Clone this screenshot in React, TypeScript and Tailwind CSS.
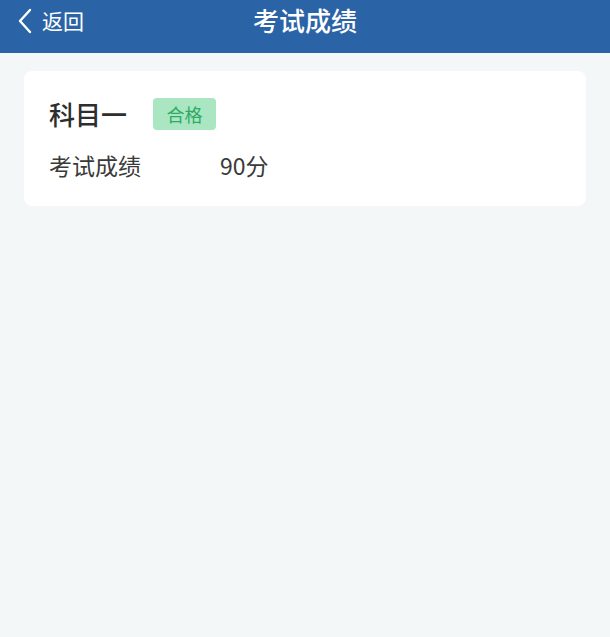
import React from "react";

export default function App() {
  return (
    <div
      className="w-[610px] h-[637px] bg-[#f3f7f8] flex flex-col"
      style={{ fontFamily: '"Noto Sans CJK SC", "Noto Sans", sans-serif' }}
    >
      <header className="relative h-[53px] bg-[#2b64a6] flex items-center justify-center shrink-0">
        <div className="absolute left-[16px] top-0 h-[41px] flex items-center gap-[8px] text-white">
          <svg width="18" height="26" viewBox="0 0 18 26" fill="none">
            <path d="M14 2 L4 13 L14 24" stroke="white" strokeWidth="2.4" strokeLinecap="round" strokeLinejoin="round" />
          </svg>
          <span className="text-[21px] leading-none">返回</span>
        </div>
        <h1 className="absolute top-0 h-[40px] flex items-center text-white text-[26px] font-medium leading-none">
          考试成绩
        </h1>
      </header>
      <main className="px-[24px] pt-[18px]">
        <div className="bg-white rounded-[8px] px-[25px] pt-[27px] pb-[29px]">
          <div className="flex items-center">
            <span className="text-[26px] font-medium text-[#2e2e2e] leading-none">科目一</span>
            <span className="ml-[26px] w-[63px] h-[32px] rounded-[4px] bg-[#a9e6c1] text-[#2faa66] text-[18px] flex items-center justify-center leading-none">
              合格
            </span>
          </div>
          <div className="flex items-center mt-[24px] text-[23px] text-[#3a3a3a] leading-none">
            <span className="w-[171px]">考试成绩</span>
            <span>90分</span>
          </div>
        </div>
      </main>
    </div>
  );
}
